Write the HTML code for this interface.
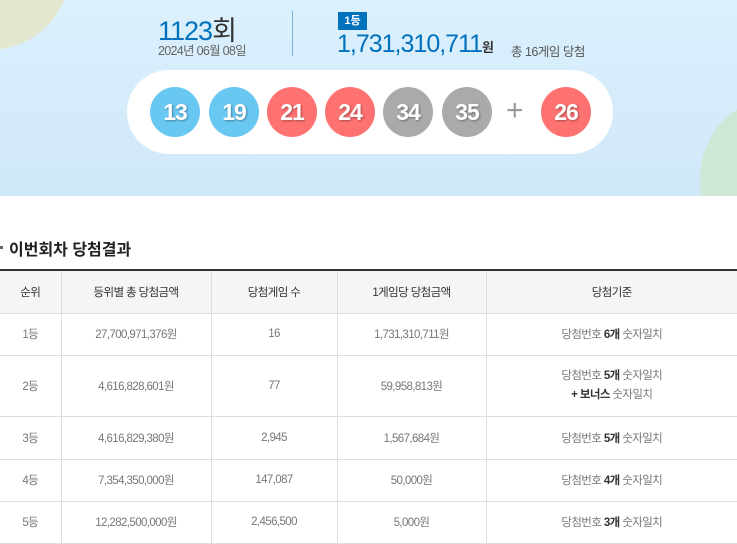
<!DOCTYPE html>
<html><head><meta charset="utf-8"><style>
*{margin:0;padding:0;box-sizing:border-box}
body{width:737px;height:541px;overflow:hidden;background:#fff;font-family:"Liberation Sans Narrow","Liberation Sans","Noto Sans CJK KR",sans-serif;position:relative}
.top{position:absolute;left:0;top:0;width:737px;height:196px;background:linear-gradient(#dcf0fd,#cfe8f8);overflow:hidden}
.c1{position:absolute;left:-90px;top:-110px;width:160px;height:160px;border-radius:50%;background:#e3e7cf}
.c2{position:absolute;left:700px;top:100px;width:140px;height:160px;border-radius:50%;background:#cfe8d6}
.abs{position:absolute;white-space:nowrap}
.ball{position:absolute;top:87px;width:50px;height:50px;border-radius:50%;color:#fff;font-size:23px;font-weight:bold;text-align:center;line-height:50px;text-shadow:1px 1px 2px rgba(0,0,0,.35);letter-spacing:-1px}
.y{background:#69c8f2}.r{background:#ff7272}.g{background:#aaa}
table{position:absolute;left:0;top:269px;width:737px;border-collapse:collapse;border-top:2px solid #333;font-size:11.5px;color:#777;text-align:center;letter-spacing:-0.6px}
td,th{border:1px solid #ddd;border-top:none;font-weight:normal}
th{background:#f5f5f5;color:#333;height:43px}
td{height:42px}
td:first-child,th:first-child{border-left:none}
td:last-child,th:last-child{border-right:none}
b{color:#333}
</style></head><body>
<div class="top"><div class="c1"></div><div class="c2"></div>
<div class="abs" style="left:158px;top:9px;font-size:27px;color:#0071bc;letter-spacing:-1px">1123<span style="color:#333">회</span></div>
<div class="abs" style="left:158px;top:40px;font-size:12.5px;color:#666;letter-spacing:-0.7px">2024년 06월 08일</div>
<div class="abs" style="left:292px;top:11px;width:1px;height:45px;background:#7ab6e0"></div>
<div class="abs" style="left:338px;top:12px;width:29px;height:18px;background:#0071bc;color:#fff;font-size:11px;font-weight:bold;text-align:center;line-height:18px">1등</div>
<div class="abs" style="left:337px;top:30px;font-size:25px;color:#0071bc;letter-spacing:-1px">1,731,310,711<span style="font-size:13px;color:#333;font-weight:bold">원</span></div>
<div class="abs" style="left:511px;top:41px;font-size:12.5px;color:#555;letter-spacing:-0.5px">총 16게임 당첨</div>
<div class="abs" style="left:127px;top:70px;width:486px;height:84px;border-radius:42px;background:#fff"></div>
<div class="ball y" style="left:150px">13</div>
<div class="ball y" style="left:209px">19</div>
<div class="ball r" style="left:267px">21</div>
<div class="ball r" style="left:325px">24</div>
<div class="ball g" style="left:383px">34</div>
<div class="ball g" style="left:442px">35</div>
<div class="abs" style="left:506px;top:94px;font-size:30px;color:#999">+</div>
<div class="ball r" style="left:541px">26</div>
</div>
<div class="abs" style="left:0;top:246px;width:3px;height:3px;background:#666"></div>
<div class="abs" style="left:9px;top:236px;font-size:16px;color:#222;font-weight:bold">이번회차 당첨결과</div>
<table>
<tr><th style="width:61px">순위</th><th style="width:150px">등위별 총 당첨금액</th><th style="width:126px">당첨게임 수</th><th style="width:149px">1게임당 당첨금액</th><th>당첨기준</th></tr>
<tr><td>1등</td><td>27,700,971,376원</td><td>16</td><td>1,731,310,711원</td><td>당첨번호 <b>6개</b> 숫자일치</td></tr>
<tr><td style="height:61px">2등</td><td>4,616,828,601원</td><td>77</td><td>59,958,813원</td><td style="line-height:19px">당첨번호 <b>5개</b> 숫자일치<br><b>+ 보너스</b> 숫자일치</td></tr>
<tr><td style="height:43px">3등</td><td>4,616,829,380원</td><td>2,945</td><td>1,567,684원</td><td>당첨번호 <b>5개</b> 숫자일치</td></tr>
<tr><td>4등</td><td>7,354,350,000원</td><td>147,087</td><td>50,000원</td><td>당첨번호 <b>4개</b> 숫자일치</td></tr>
<tr><td>5등</td><td>12,282,500,000원</td><td>2,456,500</td><td>5,000원</td><td>당첨번호 <b>3개</b> 숫자일치</td></tr>
</table>
</body></html>
